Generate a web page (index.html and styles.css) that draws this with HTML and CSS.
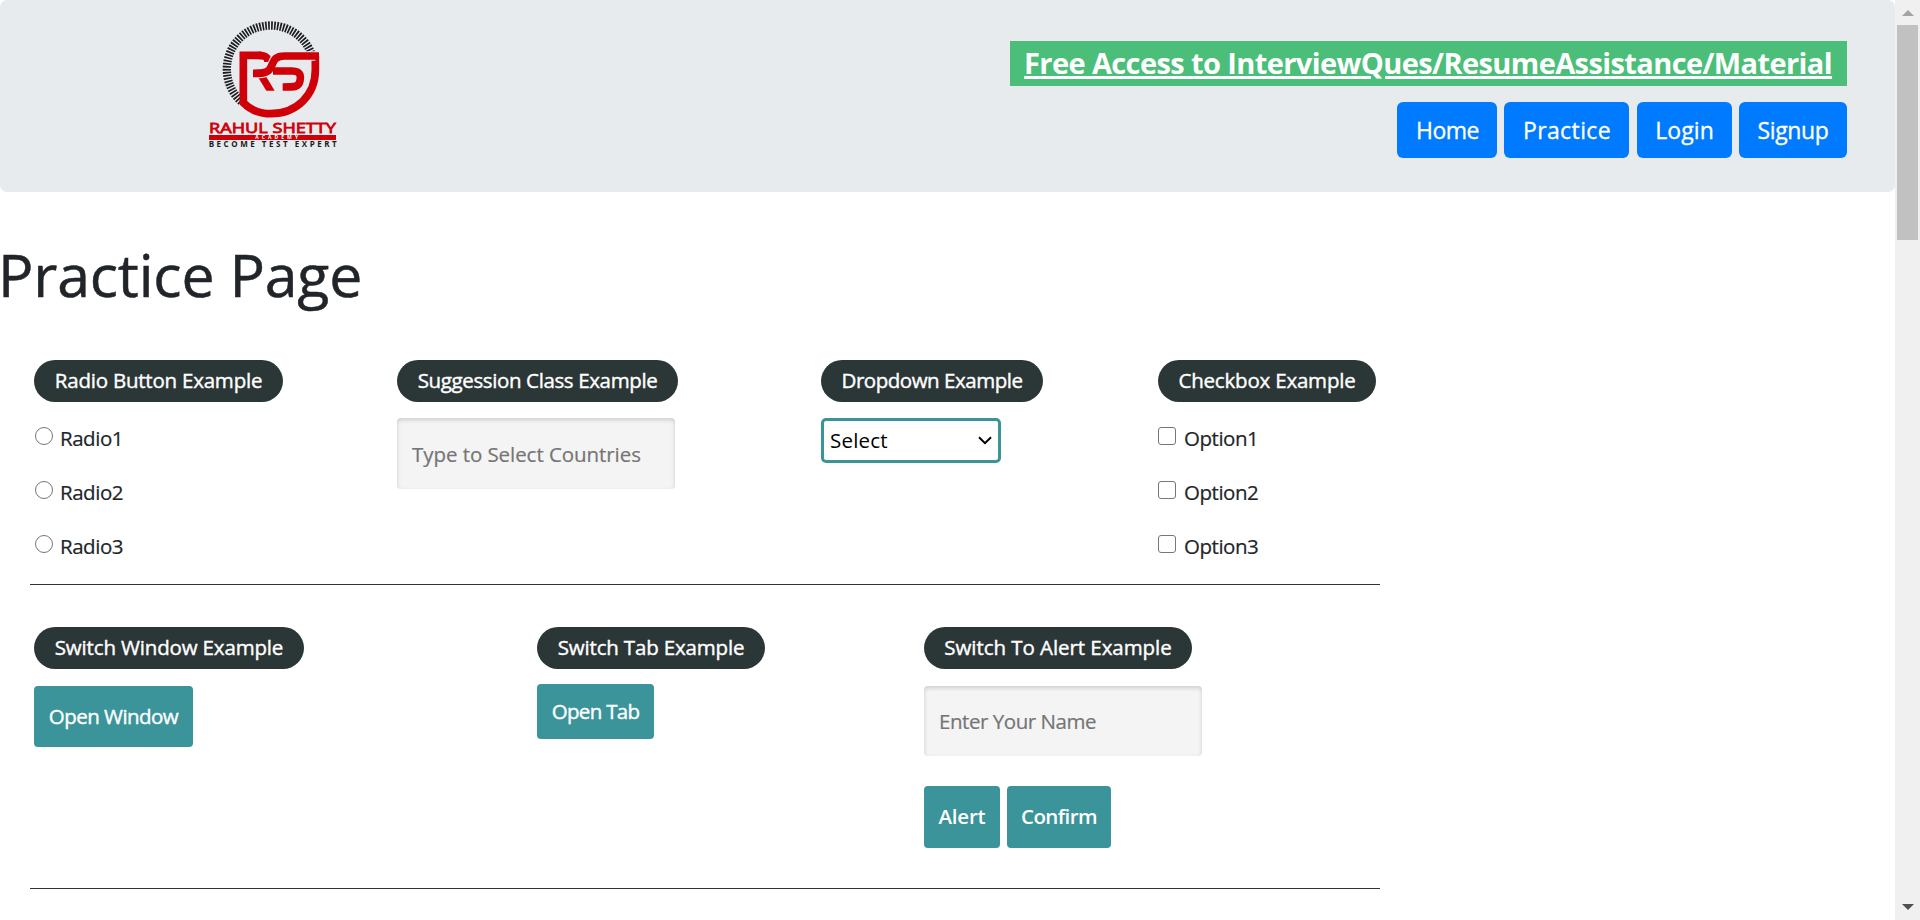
FILE: index.html
```html
<!DOCTYPE html>
<html lang="en">
<head>
<meta charset="utf-8">
<title>Practice Page</title>
<link rel="stylesheet" href="styles.css">
</head>
<body>
<div class="page">
  <header class="header">
    <svg class="logo" viewBox="0 0 510 450" role="img" aria-label="Rahul Shetty Academy">
      <path class="ticks" d="M154 275A131 131 0 1 1 364 131"/>
      <path class="mark" d="M214 136H160V278C185 303 215 311 242 311C320 311 376 255 376 180V138"/>
      <path class="mark" d="M206 136C226 136 234 142 234 156"/>
      <path class="mark-fill" d="M202 198L226 196L254 242H229Z"/>
      <path class="halo" d="M376 138H284C245 138 252 162 238 179C229 190 214 190 189 190"/>
      <path class="mark" d="M387 138H284C245 138 252 162 238 179C229 190 214 190 189 190"/>
      <path class="mark" d="M249 183H306C336 183 332 204 330 213C326 231 316 231 278 231"/>
      <text class="name" x="57" y="368" textLength="381" lengthAdjust="spacingAndGlyphs">RAHUL SHETTY</text>
      <rect class="mark-fill" x="57" y="375" width="381" height="15"/>
      <text class="academy" x="196" y="388" textLength="128">ACADEMY</text>
      <text class="motto" x="56" y="411" textLength="384">BECOME TEST EXPERT</text>
    </svg>
    <div class="header-right">
      <a class="promo">Free Access to InterviewQues/ResumeAssistance/Material</a>
      <nav class="nav">
        <a class="nav-btn home">Home</a>
        <a class="nav-btn practice">Practice</a>
        <a class="nav-btn login">Login</a>
        <a class="nav-btn signup">Signup</a>
      </nav>
    </div>
  </header>

  <h1 class="title">Practice Page</h1>

  <section class="row row-first">
    <div>
      <div class="pill pill-radio">Radio Button Example</div>
      <div class="choices">
        <label class="choice"><span class="radio"></span>Radio1</label>
        <label class="choice"><span class="radio"></span>Radio2</label>
        <label class="choice"><span class="radio"></span>Radio3</label>
      </div>
    </div>
    <div>
      <div class="pill pill-suggest">Suggession Class Example</div>
      <div class="field field-country">Type to Select Countries</div>
    </div>
    <div>
      <div class="pill pill-dropdown">Dropdown Example</div>
      <div class="select">Select
        <svg class="chevron" viewBox="0 0 14 9"><path d="M1 1.2L7 7.2L13 1.2"/></svg>
      </div>
    </div>
    <div>
      <div class="pill pill-checkbox">Checkbox Example</div>
      <div class="choices options">
        <label class="choice"><span class="checkbox"></span>Option1</label>
        <label class="choice"><span class="checkbox"></span>Option2</label>
        <label class="choice"><span class="checkbox"></span>Option3</label>
      </div>
    </div>
  </section>

  <section class="row row-second">
    <div>
      <div class="pill pill-window">Switch Window Example</div>
      <div class="btn btn-window">Open Window</div>
    </div>
    <div>
      <div class="pill pill-tab">Switch Tab Example</div>
      <div class="btn btn-tab">Open Tab</div>
    </div>
    <div>
      <div class="pill pill-alert">Switch To Alert Example</div>
      <div class="field field-name">Enter Your Name</div>
      <div class="btn-group">
        <div class="btn btn-alert">Alert</div>
        <div class="btn btn-confirm">Confirm</div>
      </div>
    </div>
  </section>
</div>
<div class="scrollbar">
  <svg class="arrow" viewBox="0 0 12 6"><path fill="#a3a3a3" d="M6 0L12 6H0Z"/></svg>
  <div class="thumb"></div>
  <svg class="arrow arrow-down" viewBox="0 0 12 6"><path fill="#505050" d="M6 6L12 0H0Z"/></svg>
</div>
</body>
</html>
```
FILE: styles.css
```css
* { box-sizing: border-box; }
body {
  margin: 0;
  height: 920px;
  display: flex;
  overflow: hidden;
  background: #fff;
  color: #212529;
  font: 20.5px "Open Sans", "Noto Sans", sans-serif;
  white-space: nowrap;
}
.page { width: 1895px; }

.header {
  display: flex;
  justify-content: space-between;
  height: 192px;
  padding: 10px 48px 0 190px;
  border-radius: 7px;
  background: #e8ebee;
}
.logo { width: 170px; height: 150px; }
.ticks { fill: none; stroke: #1c1c1e; stroke-width: 25; stroke-dasharray: 5 3.8; }
.mark { fill: none; stroke: #d00009; stroke-width: 23; }
.mark-fill { fill: #d00009; }
.halo { fill: none; stroke: #e8ebee; stroke-width: 29; }
.name { font: 500 46px "Open Sans", sans-serif; fill: #d00009; stroke: #d00009; stroke-width: 2.5; }
.academy { font: 700 15px "Open Sans", sans-serif; fill: #fff; }
.motto { font: 700 24px "Open Sans", sans-serif; fill: #1c1c1e; }

.header-right {
  display: flex;
  flex-direction: column;
  align-items: flex-end;
  gap: 16px;
  padding-top: 31px;
}
.promo {
  display: flex;
  width: 837px;
  height: 45px;
  padding: 0 0 2px 14px;
  align-items: center;
  background: #4bbe79;
  color: #fff;
  font-size: 29px;
  font-weight: 700;
  letter-spacing: -0.6px;
  text-decoration: underline;
  text-decoration-thickness: 3px;
  text-underline-offset: 2px;
}
.nav { display: flex; gap: 7px; }
.nav-btn {
  display: flex;
  align-items: center;
  justify-content: center;
  height: 56px;
  border-radius: 6px;
  background: #007bff;
  color: #fff;
  font-size: 23px;
  -webkit-text-stroke: 0.3px;
}
.home { width: 100px; padding-left: 1px; letter-spacing: -0.5px; }
.practice { width: 125px; padding-left: 1px; letter-spacing: 0.4px; }
.login { width: 95px; margin-left: 1px; letter-spacing: 0.1px; }
.signup { width: 108px; letter-spacing: -0.35px; }

.title {
  margin: 46px 0 50px -2px;
  font-size: 59px;
  line-height: 72px;
  font-weight: 400;
  letter-spacing: -0.2px;
  -webkit-text-stroke: 0.5px;
}

.row {
  display: grid;
  width: 1350px;
  margin-left: 30px;
  padding-left: 4px;
  border-bottom: 1px solid #2b3636;
}
.row-first { grid-template-columns: 363px 424px 337px 1fr; height: 225px; }
.row-second { grid-template-columns: 503px 387px 1fr; height: 304px; padding-top: 42px; }

.pill {
  display: flex;
  align-items: center;
  justify-content: center;
  height: 42px;
  padding-bottom: 2px;
  border-radius: 21px;
  background: #2b3636;
  color: #fff;
  font-weight: 500;
  -webkit-text-stroke: 0.4px;
}
.pill-radio { width: 249px; letter-spacing: -0.22px; }
.pill-suggest { width: 281px; letter-spacing: -0.37px; }
.pill-dropdown { width: 222px; letter-spacing: -0.47px; }
.pill-checkbox { width: 218px; letter-spacing: -0.2px; }
.pill-window { width: 270px; letter-spacing: -0.16px; }
.pill-tab { width: 228px; letter-spacing: -0.17px; }
.pill-alert { width: 268px; letter-spacing: -0.06px; }

.choices { padding-top: 9px; letter-spacing: -0.47px; }
.choice { display: flex; align-items: center; height: 54px; -webkit-text-stroke: 0.2px; }
.radio, .checkbox {
  width: 18px;
  height: 18px;
  margin: 0 7px 4px 1px;
  border: 1.5px solid #767676;
  border-radius: 50%;
}
.checkbox { margin: 0 8px 4px 0; border-radius: 3px; }

.field {
  display: flex;
  align-items: center;
  width: 278px;
  margin-top: 16px;
  padding-left: 15px;
  border-radius: 4px;
  background: #f4f4f4;
  box-shadow: inset 0 2px 4px rgba(0, 0, 0, 0.16);
  color: #757575;
  -webkit-text-stroke: 0.2px;
}
.field-country { height: 71px; letter-spacing: -0.06px; }
.field-name { height: 70px; margin-top: 17px; padding-bottom: 1px; letter-spacing: -0.45px; }

.select {
  display: flex;
  align-items: center;
  justify-content: space-between;
  width: 180px;
  height: 45px;
  margin-top: 16px;
  padding: 0 6px 1px;
  border: 3px solid #3a9499;
  border-radius: 5px;
  color: #000;
  letter-spacing: 0.2px;
}
.chevron { width: 14px; height: 9px; fill: none; stroke: #000; stroke-width: 2; }

.btn {
  display: flex;
  align-items: center;
  justify-content: center;
  border-radius: 4px;
  background: #3a9499;
  color: #fff;
  font-weight: 500;
  -webkit-text-stroke: 0.4px;
}
.btn-window { width: 159px; height: 61px; margin-top: 17px; padding-bottom: 1px; letter-spacing: -0.54px; }
.btn-tab { width: 117px; height: 55px; margin-top: 15px; padding-bottom: 1px; letter-spacing: -0.7px; }
.btn-group { display: flex; gap: 7px; margin-top: 30px; }
.btn-alert, .btn-confirm {
  height: 62px;
  padding-bottom: 2px;
  font-weight: 600;
  -webkit-text-stroke: 0;
}
.btn-alert { width: 76px; letter-spacing: -0.2px; }
.btn-confirm { width: 104px; letter-spacing: -0.57px; }

.scrollbar {
  display: flex;
  flex-direction: column;
  align-items: center;
  width: 25px;
  padding: 10px 0;
  background: #f0f0f0;
}
.arrow { width: 12px; height: 6px; }
.thumb { width: 21px; height: 215px; margin-top: 9px; background: #c1c1c1; }
.arrow-down { margin-top: auto; }
```
